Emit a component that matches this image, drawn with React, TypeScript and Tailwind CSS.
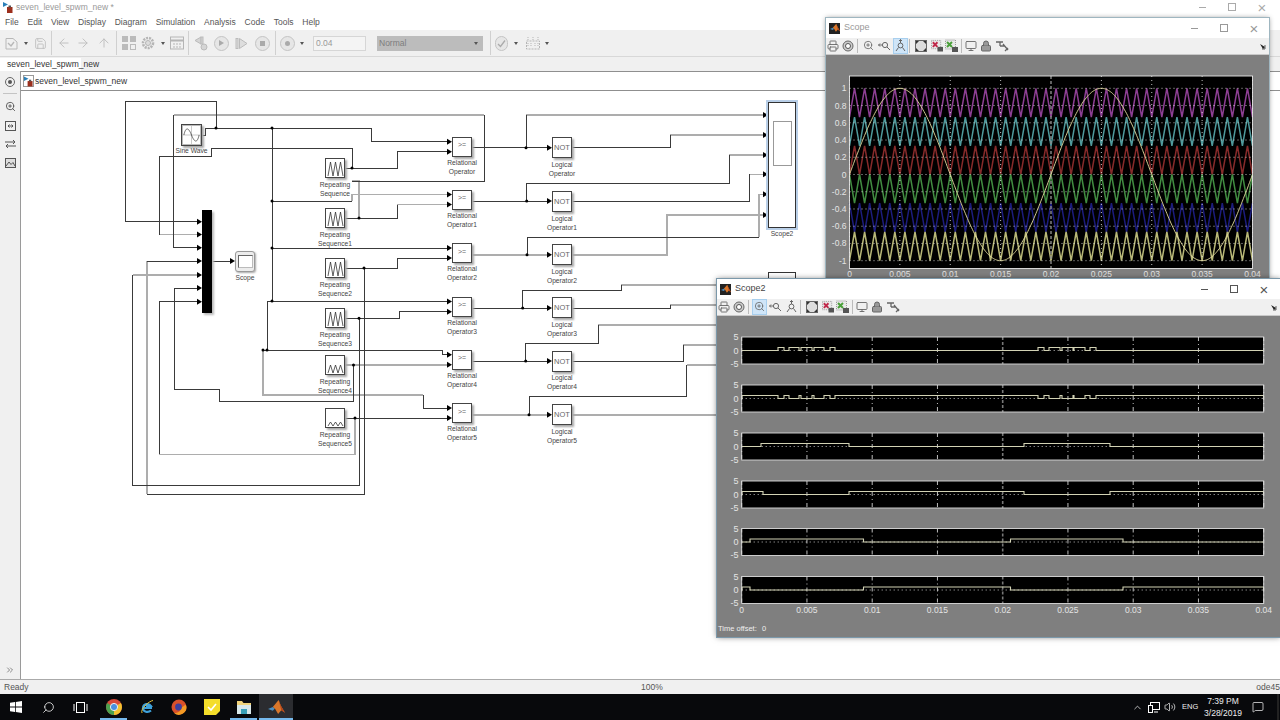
import React from 'react';
import { ArrowLeft, ArrowRight, ArrowUp, ChevronUp, ChevronsRight, Lock, MessageSquare, Monitor, Printer, Save, Search, Volume2, ZoomIn } from 'lucide-react';

const BG = '#f0f0f0';

// ---- diagram data, all in page coordinates ----
const darkWires = [
  'M202 135H205V128H371V141.7H448',
  'M216 128V101.5H125V221.7H197',
  'M272 128V301',
  'M272 201H352',
  'M272 248H448',
  'M267 350V301.5H448',
  'M263 350H442V354.7H448',
  'M423 395V408H448',
  'M345 168H397V151.7H448',
  'M352 168V148.5H211.7V156H159.3V234.5',
  'M484 115V181H352',
  'M173.7 115V247.7H197',
  'M345 218H397V204.5',
  'M345 268H397V258H448',
  'M364 268V494H146.7',
  'M146.7 261H197',
  'M345 318.3H399V311.7H448',
  'M359 318.3V485H132.7V275',
  'M353.5 365V401H219V389.3H174.3V288H197',
  'M345 418H448',
  'M159.3 454.3V301.7H197',
  'M212 261H231',
  'M472 147.7H548',
  'M526 147.7V115',
  'M572 147.7H670V135',
  'M472 201H548',
  'M526.7 201V183.3H729.3V155',
  'M572 201H749V174.3',
  'M527 254.7V237.3H759',
  'M472 308H548',
  'M522.7 308V290.7H621V284.7',
  'M572 308H670V305',
  'M472 361H548',
  'M525.7 361V343.3H598.3V325',
  'M572 361H683V345',
  'M529 414.7V396.7H686.7V365',
];

const grayWires = [
  'M352 201V194.5H448',
  'M263 350V395H423',
  'M159.3 234.5H197',
  'M173.7 115H484',
  'M352 181H359V218',
  'M397 204.5H448',
  'M146.7 494V261',
  'M132.7 275H197',
  'M345 365H448',
  'M355 418V454.3H159.3',
  'M526 115H764',
  'M670 135H764',
  'M729.3 155H764',
  'M749 174.3H764',
  'M759 237.3V194.3H764',
  'M472 254.7H548',
  'M572 254.7H666.7V215H764',
  'M621 284.7H717',
  'M670 305H717',
  'M598.3 325H717',
  'M683 345H717',
  'M686.7 365H717',
  'M472 414.7H548',
  'M572 414.7H717',
];

const arrows: [number, number][] = [
  [447, 141.7], [447, 151.7], [447, 194.5], [447, 204.5], [447, 248], [447, 258],
  [447, 301.5], [447, 311.7], [447, 354.7], [447, 364.7], [447, 408], [447, 418],
  [547, 147.7], [547, 201], [547, 254.7], [547, 308], [547, 361], [547, 414.7],
  [197, 221.7], [197, 234.5], [197, 247.7], [197, 261], [197, 275], [197, 288], [197, 301.7],
  [230, 261], [763, 115], [763, 135], [763, 155], [763, 174.3], [763, 194.3], [763, 215],
];

const dots: [number, number][] = [
  [216, 128], [272, 128], [272, 201], [272, 248], [272, 301], [267, 350], [263, 350],
  [352, 168], [359, 218], [364, 268], [359, 318.3], [353.5, 365], [355, 418],
  [526, 147.7], [526.7, 201], [527, 254.7], [522.7, 308], [525.7, 361], [529, 414.7],
];

const relOps = [136.7, 190, 243.3, 297, 350, 403.3];
const notOps = [137, 191, 244, 297, 350.7, 404];
const sequences: { y: number; low: number }[] = [
  { y: 158, low: 2 }, { y: 208, low: 2 }, { y: 258, low: 2 },
  { y: 308, low: 2 }, { y: 355, low: 8 }, { y: 408, low: 12 },
];

const at = (x: number, y: number, w?: number, h?: number): React.CSSProperties => ({ left: x - 21, top: y - 91, width: w, height: h });

const Caption = ({ cx, y, lines }: { cx: number; y: number; lines: string[] }) => (
  <div className="absolute text-center text-[6.7px] leading-[9px] text-[#444]" style={at(cx - 35, y, 70)}>
    {lines.map((l) => (
      <div key={l}>{l}</div>
    ))}
  </div>
);

const Block = ({ x, y, w, h, children }: { x: number; y: number; w: number; h: number; children?: React.ReactNode }) => (
  <div className="absolute flex items-center justify-center border border-[#444] bg-white shadow-[2px_2px_2px_#a8a8a8]" style={at(x, y, w, h)}>
    {children}
  </div>
);

const Canvas = () => (
  <div className="relative flex-1 overflow-hidden bg-white">
    <svg className="absolute inset-0" width="1259" height="588" viewBox="21 91 1259 588" shapeRendering="crispEdges">
      {grayWires.map((d) => (
        <path key={d} d={d} fill="none" stroke="#adadad" strokeWidth="1.6" />
      ))}
      {darkWires.map((d) => (
        <path key={d} d={d} fill="none" stroke="#3a3a3a" strokeWidth="1" />
      ))}
      <g shapeRendering="auto">
        {arrows.map(([x, y]) => (
          <polygon key={`${x}-${y}`} points={`${x},${y - 3} ${x + 5},${y} ${x},${y + 3}`} fill="#000" />
        ))}
        {dots.map(([x, y]) => (
          <circle key={`${x}-${y}`} cx={x} cy={y} r="1.5" fill="#000" />
        ))}
      </g>
    </svg>

    {/* sine source */}
    <Block x={181} y={124} w={21} h={22}>
      <svg width="19" height="20" viewBox="0 0 19 20" className="border border-[#bbb]">
        <path d="M0 10H19M9.5 0V20" stroke="#aaa" strokeWidth="0.7" />
        <path d="M1 10C3 1 6 1 9.5 10S16 19 18 10" fill="none" stroke="#333" strokeWidth="0.8" />
      </svg>
    </Block>
    <Caption cx={191.5} y={146} lines={['Sine Wave']} />

    {/* mux bar */}
    <div className="absolute bg-black shadow-[2px_2px_2px_#bbb]" style={at(202, 210, 10, 103)} />

    {/* scope */}
    <div className="absolute flex items-center justify-center rounded-[3px] border border-[#999] bg-[#ececec] shadow-[1px_1px_2px_#aaa]" style={at(235, 251, 20, 21)}>
      <div className="h-[13px] w-[15px] border border-[#666] border-b-[#bbb] border-r-[#bbb] bg-white" />
    </div>
    <Caption cx={245} y={273} lines={['Scope']} />

    {sequences.map((s, i) => (
      <React.Fragment key={s.y}>
        <Block x={325} y={s.y} w={20} h={20}>
          <svg width="17" height="17" viewBox="0 0 17 17">
            <polyline points={`1,16 3.5,${s.low} 6,16 8.5,${s.low} 11,16 13.5,${s.low} 16,16`} fill="none" stroke="#333" strokeWidth="0.8" />
          </svg>
        </Block>
        <Caption cx={335} y={s.y + 21.5} lines={['Repeating', i === 0 ? 'Sequence' : `Sequence${i}`]} />
      </React.Fragment>
    ))}

    {relOps.map((y, i) => (
      <React.Fragment key={y}>
        <Block x={452} y={y} w={20} h={20}>
          <span className="pb-[3px] text-[7px] text-[#666]">&gt;=</span>
        </Block>
        <Caption cx={462} y={y + 21} lines={['Relational', i === 0 ? 'Operator' : `Operator${i}`]} />
      </React.Fragment>
    ))}

    {notOps.map((y, i) => (
      <React.Fragment key={y}>
        <Block x={552} y={y} w={20} h={21}>
          <span className="text-[7.5px] text-[#666]">NOT</span>
        </Block>
        <Caption cx={562} y={y + 22.5} lines={['Logical', i === 0 ? 'Operator' : `Operator${i}`]} />
      </React.Fragment>
    ))}

    {/* big scope with 6 inputs, selected */}
    <div className="absolute border border-[#333] bg-white outline-2 outline-[#b9cfe8]" style={at(768, 102, 28, 126)}>
      <div className="ml-[4px] mt-[18px] h-[45px] w-[19px] border border-[#999] bg-white" />
    </div>
    <Caption cx={782} y={229} lines={['Scope2']} />
    <div className="absolute border border-[#333] bg-white" style={at(768, 272, 28, 120)} />
  </div>
);

// ---- scope plots ----
const range = (n: number) => Array.from({ length: n }, (_, i) => i);
const TICKS = ['0', '0.005', '0.01', '0.015', '0.02', '0.025', '0.03', '0.035', '0.04'];

const ScopePlot = () => {
  const x0 = 849.5;
  const pw = 403;
  const mid = 174.5;
  const k = 86.2;
  const px = (t: number) => x0 + (t / 0.04) * pw;
  const py = (v: number) => mid - v * k;
  const tri = (lo: number, hi: number, startHigh: boolean) =>
    range(81)
      .map((i) => {
        const up = i % 2 === 1;
        const v = up !== startHigh ? hi : lo;
        return `${px(i * 0.0005)},${py(v)}`;
      })
      .join(' ');
  const sine = range(401)
    .map((i) => {
      const t = (i / 400) * 0.04;
      return `${px(t).toFixed(1)},${py(Math.sin(2 * Math.PI * 50 * t)).toFixed(1)}`;
    })
    .join(' ');
  const bands = [
    { lo: 0.667, hi: 1, c: '#8d3f93', s: false },
    { lo: 0.333, hi: 0.667, c: '#4f9a9c', s: false },
    { lo: 0, hi: 0.333, c: '#852a2a', s: false },
    { lo: -0.333, hi: 0, c: '#418c41', s: true },
    { lo: -0.667, hi: -0.333, c: '#1c1c7c', s: true },
    { lo: -1, hi: -0.667, c: '#b8b878', s: false },
  ];
  const yTicks = [1, 0.8, 0.6, 0.4, 0.2, 0, -0.2, -0.4, -0.6, -0.8, -1];
  return (
    <svg className="block" width="443" height="223" viewBox="826 55 443 223" fontFamily="'Liberation Sans', sans-serif">
      <rect x={x0} y="76" width={pw} height="192.5" fill="#000" />
      {bands.map((b) => (
        <polyline key={b.c} points={tri(b.lo, b.hi, b.s)} fill="none" stroke={b.c} strokeWidth="1.5" />
      ))}
      {yTicks.map((v) => (
        <line key={v} x1={x0} x2={x0 + pw} y1={py(v)} y2={py(v)} stroke="#eee" strokeWidth="0.8" strokeDasharray="1 3" />
      ))}
      {TICKS.map((l, i) =>
        i === 4 ? (
          <line key={l} x1={px(i * 0.005)} x2={px(i * 0.005)} y1="76" y2="268.5" stroke="#8a8a8a" strokeWidth="1.4" strokeDasharray="3 2" />
        ) : (
          <line key={l} x1={px(i * 0.005)} x2={px(i * 0.005)} y1="76" y2="268.5" stroke="#eee" strokeWidth="0.8" strokeDasharray="1 3" />
        )
      )}
      <polyline points={sine} fill="none" stroke="#e4dea0" strokeWidth="0.9" />
      <rect x={x0} y="76" width={pw} height="192.5" fill="none" stroke="#e6e6e6" strokeWidth="0.9" />
      {yTicks.map((v) => (
        <text key={v} x="846.5" y={py(v) + 3} textAnchor="end" fontSize="8.5" fill="#e4e4e4">
          {v}
        </text>
      ))}
      {TICKS.map((l, i) => (
        <text key={l} x={px(i * 0.005)} y="277" textAnchor="middle" fontSize="8.5" fill="#e4e4e4">
          {l}
        </text>
      ))}
    </svg>
  );
};

const PULSE_A: [number, number][] = [[778, 784], [789, 799], [801, 812], [814, 824], [830, 835], [1038, 1044], [1049, 1060], [1062, 1073], [1074, 1085], [1090, 1096]];
const PULSE_B: [number, number][] = [[742, 778], [784, 789], [799, 801], [812, 814], [824, 830], [835, 1038], [1044, 1049], [1060, 1062], [1073, 1074], [1085, 1090], [1096, 1263.5]];

const rows: { top: number; highs: [number, number][] }[] = [
  { top: 337, highs: PULSE_A },
  { top: 385, highs: PULSE_B },
  { top: 433, highs: [[761, 849], [1024, 1110]] },
  { top: 481, highs: [[742, 763], [849, 1024], [1110, 1263.5]] },
  { top: 528.5, highs: [[750, 863.5], [1010.5, 1123]] },
  { top: 576.5, highs: [[742, 750], [863.5, 1010.5], [1123, 1263.5]] },
];

const Scope2Plot = () => {
  const x0 = 741.7;
  const pw = 522;
  return (
    <svg className="block" width="563" height="320" viewBox="717 316 563 320" fontFamily="'Liberation Sans', sans-serif">
      {rows.map((r) => {
        const zero = r.top + 13.5;
        const high = zero - 3;
        let d = `M${x0} ${zero}`;
        r.highs.forEach(([a, b]) => {
          d += `H${a}V${high}H${b}V${zero}`;
        });
        d += `H${x0 + pw}`;
        return (
          <g key={r.top}>
            <rect x={x0} y={r.top} width={pw} height="27" fill="#000" />
            <line x1={x0} x2={x0 + pw} y1={zero} y2={zero} stroke="#eee" strokeWidth="0.8" strokeDasharray="1 3" />
            {TICKS.map((l, i) => {
              const x = x0 + (i * pw) / 8;
              return i === 4 ? (
                <line key={l} x1={x} x2={x} y1={r.top} y2={r.top + 27} stroke="#777" strokeWidth="1.6" strokeDasharray="3 2" />
              ) : (
                <line key={l} x1={x} x2={x} y1={r.top} y2={r.top + 27} stroke="#eee" strokeWidth="0.8" strokeDasharray="4 3 1 3" />
              );
            })}
            <path d={d} fill="none" stroke="#d2d2b4" strokeWidth="1.1" />
            <rect x={x0} y={r.top} width={pw} height="27" fill="none" stroke="#dcdcdc" strokeWidth="0.9" />
            {[['5', 3], ['0', 16.5], ['-5', 29.5]].map(([t, dy]) => (
              <text key={t} x="738.5" y={r.top + (dy as number)} textAnchor="end" fontSize="9" fill="#e4e4e4">
                {t}
              </text>
            ))}
          </g>
        );
      })}
      {TICKS.map((l, i) => (
        <text key={l} x={x0 + (i * pw) / 8} y="612.5" textAnchor="middle" fontSize="8.5" fill="#e4e4e4">
          {l}
        </text>
      ))}
      <text x="718" y="631" fontSize="7.5" fill="#eee">
        Time offset:
      </text>
      <text x="762" y="631" fontSize="7.5" fill="#eee">
        0
      </text>
    </svg>
  );
};

// ---- floating window chrome ----
const Slot = ({ w, active, children }: { w: string; active?: boolean; children?: React.ReactNode }) => (
  <div className={`flex h-full shrink-0 items-center justify-center ${w}`}>
    {active ? <div className="flex h-[16px] w-[15px] items-center justify-center border border-[#a8cfee] bg-[#cfe5f8]">{children}</div> : children}
  </div>
);

const ScopeToolbar = ({ selected }: { selected: 'zoom' | 'zoomY' }) => (
  <div className="relative flex h-[17px] items-center border-b border-[#c8c8c8] bg-[#f0f0f0] pb-[1px] text-[#666]">
    <Slot w="w-[14px]">
      <Printer size={12} strokeWidth={1.8} />
    </Slot>
    <Slot w="w-[15px]">
      <svg width="12" height="12" viewBox="0 0 12 12">
        <circle cx="6" cy="6" r="5" fill="#ccc" stroke="#666" />
        <circle cx="6" cy="6" r="2.5" fill="#fff" stroke="#555" />
      </svg>
    </Slot>
    <Slot w="w-[5px]">
      <div className="h-[14px] w-px bg-[#bbb]" />
    </Slot>
    <Slot w="w-[16px]" active={selected === 'zoom'}>
      <ZoomIn size={11} strokeWidth={1.8} />
    </Slot>
    <Slot w="w-[16px]">
      <svg width="13" height="12" viewBox="0 0 13 12" fill="none" stroke="#666">
        <circle cx="7" cy="5" r="2.6" />
        <path d="M9 7l3 3M0.5 5H4M2 3.5L.5 5L2 6.5" />
      </svg>
    </Slot>
    <Slot w="w-[16px]" active={selected === 'zoomY'}>
      <svg width="11" height="13" viewBox="0 0 11 13" fill="none" stroke="#666">
        <circle cx="5.5" cy="6.5" r="2.4" />
        <path d="M5.5 0.5V4M4 2L5.5 .5L7 2M3.5 8.5L1 12M7.5 8.5L10 12" />
      </svg>
    </Slot>
    <Slot w="w-[3px]">
      <div className="h-[14px] w-px bg-[#bbb]" />
    </Slot>
    <Slot w="w-[20px]">
      <svg width="12" height="12" viewBox="0 0 12 12">
        <rect x="0.5" y="0.5" width="11" height="11" fill="#ddd" stroke="#666" />
        <path d="M1 1h3L1 4zM11 1H8l3 3zM1 11h3L1 8zM11 11H8l3-3z" fill="#333" />
      </svg>
    </Slot>
    <Slot w="w-[12px]">
      <svg width="13" height="13" viewBox="0 0 13 13">
        <rect x="0.5" y="1" width="10" height="9" fill="#e8e8e8" stroke="#999" strokeDasharray="1 1" />
        <path d="M2 3l5 5M7 3L2 8" stroke="#c0284a" strokeWidth="2" />
        <rect x="7" y="8" width="6" height="5" fill="#555" />
      </svg>
    </Slot>
    <Slot w="w-[16px]">
      <svg width="13" height="13" viewBox="0 0 13 13">
        <rect x="0.5" y="1" width="10" height="9" fill="#e8e8e8" stroke="#999" strokeDasharray="1 1" />
        <path d="M2 3l5 5M7 3L2 8" stroke="#4aa03a" strokeWidth="2" />
        <rect x="7" y="8" width="6" height="5" fill="#555" />
      </svg>
    </Slot>
    <Slot w="w-[5px]">
      <div className="h-[14px] w-px bg-[#bbb]" />
    </Slot>
    <Slot w="w-[14px]">
      <Monitor size={12} strokeWidth={1.8} />
    </Slot>
    <Slot w="w-[16px]">
      <Lock size={12} strokeWidth={2} fill="#999" />
    </Slot>
    <Slot w="w-[16px]">
      <svg width="13" height="13" viewBox="0 0 13 13" fill="none" stroke="#666" strokeWidth="1.3">
        <path d="M0 3H7M4 3V7M4 7H9M7 5l5 6M9 12l3-3" />
      </svg>
    </Slot>
    <svg className="absolute right-[2px] top-[6px]" width="7" height="6" viewBox="0 0 7 6">
      <path d="M0 0L5 3L3 5z" fill="#222" />
      <path d="M5 1V5H2" fill="none" stroke="#222" strokeWidth="0.7" />
    </svg>
  </div>
);

const MatlabLogo = ({ size }: { size: number }) => (
  <svg width={size} height={size} viewBox="0 0 16 16">
    <path d="M0 9.5L4.5 7.5L6.5 9L4.5 11z" fill="#4d8ec0" />
    <path d="M4.5 7.5L10 1L12 6L16 13L12.5 10.5L9.5 14L6.5 9z" fill="#d9772b" />
    <path d="M10 1L12 6L16 13L12.5 10.5z" fill="#b5451b" />
  </svg>
);

const WinControls = ({ color }: { color: string }) => (
  <div className={`flex items-center ${color}`}>
    <div className="flex w-[30px] justify-center">
      <div className="h-px w-[7px] bg-current" />
    </div>
    <div className="flex w-[30px] justify-center">
      <div className="h-[8px] w-[8px] border border-current" />
    </div>
    <div className="flex w-[30px] justify-center text-[15px] font-light leading-none">×</div>
  </div>
);

const ScopeWindow = () => (
  <div className="absolute left-[826px] top-[18px] flex h-[261px] w-[443px] flex-col bg-[#7f7f7f] shadow-[0_0_5px_rgba(0,0,0,0.45)] ring-1 ring-[#9fb6c0]">
    <div className="flex h-[20px] items-center justify-between bg-white pl-[3px] pr-[0px]">
      <div className="flex items-center gap-[4px]">
        <div className="flex h-[11px] w-[11px] items-center justify-center bg-[#222]">
          <MatlabLogo size={10} />
        </div>
        <span className="text-[9px] text-[#999]">Scope</span>
      </div>
      <WinControls color="text-[#999]" />
    </div>
    <ScopeToolbar selected="zoomY" />
    <ScopePlot />
  </div>
);

const Scope2Window = () => (
  <div className="absolute left-[717px] top-[279px] flex h-[358px] w-[563px] flex-col bg-[#7f7f7f] shadow-[0_0_6px_rgba(0,0,0,0.55)] ring-1 ring-[#7b98aa]">
    <div className="flex h-[20px] items-center justify-between bg-white pl-[3px] pr-[1px]">
      <div className="flex items-center gap-[4px]">
        <div className="flex h-[11px] w-[11px] items-center justify-center bg-[#222]">
          <MatlabLogo size={10} />
        </div>
        <span className="text-[9px] text-[#444]">Scope2</span>
      </div>
      <WinControls color="text-[#555]" />
    </div>
    <ScopeToolbar selected="zoom" />
    <Scope2Plot />
  </div>
);

// ---- main window bars ----
const ModelIcon = () => (
  <svg width="10" height="11" viewBox="0 0 10 11">
    <path d="M0 0L5 2.5L0 5z" fill="#2b7fb8" />
    <rect x="4" y="5" width="5.5" height="6" fill="#9c2f1c" />
    <rect x="5.5" y="3.5" width="2.5" height="2" fill="#555" />
  </svg>
);

const Caret = () => <div className="h-0 w-0 border-x-[2.5px] border-t-[3px] border-x-transparent border-t-[#555]" />;

const Sep = ({ w }: { w: string }) => (
  <div className={`flex h-full shrink-0 items-center justify-center ${w}`}>
    <div className="h-[24px] w-px bg-[#d0d0d0]" />
  </div>
);

const Tb = ({ w, children }: { w: string; children?: React.ReactNode }) => (
  <div className={`flex h-full shrink-0 items-center justify-center ${w}`}>{children}</div>
);

const RoundBtn = ({ children }: { children?: React.ReactNode }) => (
  <div className="flex h-[15px] w-[15px] items-center justify-center rounded-full border border-[#c4c4c4] bg-[#e6e6e6]">{children}</div>
);

const MainToolbar = () => (
  <div className="flex h-[27px] items-center border-b border-[#d8d8d8] pl-[4px] text-[#bdbdbd]" style={{ backgroundColor: BG }}>
    <Tb w="w-[15px]">
      <svg width="13" height="13" viewBox="0 0 13 13" fill="none" stroke="#b8b8b8">
        <path d="M1 1.5H8L12 5V12H1z" />
        <path d="M3 6L6 9L9 5" strokeWidth="1.4" />
      </svg>
    </Tb>
    <Tb w="w-[13px]">
      <Caret />
    </Tb>
    <Tb w="w-[16px]">
      <Save size={13} strokeWidth={1.6} />
    </Tb>
    <Sep w="w-[6px]" />
    <Tb w="w-[19px]">
      <ArrowLeft size={14} strokeWidth={1.6} />
    </Tb>
    <Tb w="w-[20px]">
      <ArrowRight size={14} strokeWidth={1.6} />
    </Tb>
    <Tb w="w-[21px]">
      <ArrowUp size={14} strokeWidth={1.6} />
    </Tb>
    <Sep w="w-[5px]" />
    <Tb w="w-[19px]">
      <svg width="14" height="14" viewBox="0 0 14 14" fill="#bbb">
        <rect x="0" y="0" width="6" height="6" />
        <rect x="8" y="0" width="6" height="6" />
        <rect x="0" y="8" width="6" height="6" />
        <rect x="8.5" y="8.5" width="5" height="5" fill="none" stroke="#bbb" />
      </svg>
    </Tb>
    <Tb w="w-[20px]">
      <svg width="14" height="14" viewBox="0 0 14 14">
        <circle cx="7" cy="7" r="5" fill="none" stroke="#b5b5b5" strokeWidth="2.6" strokeDasharray="2 1" />
        <circle cx="7" cy="7" r="2.5" fill="#ddd" stroke="#b5b5b5" />
      </svg>
    </Tb>
    <Tb w="w-[9px]">
      <Caret />
    </Tb>
    <Tb w="w-[19px]">
      <svg width="14" height="14" viewBox="0 0 14 14" fill="none" stroke="#b5b5b5">
        <rect x="0.5" y="1" width="13" height="12" />
        <path d="M0.5 4.5H13.5" strokeWidth="2" />
        <path d="M3 8H11M3 11H11" strokeDasharray="2 1" />
      </svg>
    </Tb>
    <Sep w="w-[4px]" />
    <Tb w="w-[23px]">
      <svg width="16" height="15" viewBox="0 0 16 15" fill="#d5d5d5" stroke="#bbb">
        <path d="M7 1V8L1 4.5z" />
        <rect x="7" y="1" width="2" height="7" />
        <circle cx="10" cy="11" r="3" />
      </svg>
    </Tb>
    <Tb w="w-[16px]">
      <RoundBtn>
        <div className="ml-[1px] h-0 w-0 border-y-[3.5px] border-l-[5px] border-y-transparent border-l-[#aaa]" />
      </RoundBtn>
    </Tb>
    <Tb w="w-[24px]">
      <svg width="13" height="13" viewBox="0 0 13 13" fill="#ddd" stroke="#bbb">
        <rect x="1" y="1.5" width="2" height="10" />
        <path d="M4.5 1.5L12 6.5L4.5 11.5z" />
      </svg>
    </Tb>
    <Tb w="w-[19px]">
      <RoundBtn>
        <div className="h-[5px] w-[5px] bg-[#aaa]" />
      </RoundBtn>
    </Tb>
    <Sep w="w-[6px]" />
    <Tb w="w-[19px]">
      <RoundBtn>
        <div className="h-[5px] w-[5px] rounded-full bg-[#aaa]" />
      </RoundBtn>
    </Tb>
    <Tb w="w-[9px]">
      <Caret />
    </Tb>
    <div className="ml-[7px] flex h-[15px] w-[53px] items-center border border-[#d6d6d6] bg-[#f4f4f4] pl-[2px] text-[8.5px] text-[#999]">0.04</div>
    <div className="ml-[11px] flex h-[15px] w-[106px] items-center justify-between bg-[#bcbcbc] pl-[2px] pr-[5px] text-[8.5px] text-[#7c7c7c]">
      Normal
      <Caret />
    </div>
    <div className="ml-[2px] flex h-full">
      <Sep w="w-[10px]" />
    </div>
    <Tb w="w-[13px]">
      <RoundBtn>
        <svg width="9" height="9" viewBox="0 0 9 9" fill="none" stroke="#aaa" strokeWidth="1.3">
          <path d="M1 5L3.5 7.5L8 1.5" />
        </svg>
      </RoundBtn>
    </Tb>
    <Tb w="w-[15px]">
      <Caret />
    </Tb>
    <Tb w="w-[19px]">
      <svg width="14" height="13" viewBox="0 0 14 13" fill="none" stroke="#b5b5b5">
        <path d="M2 0V3M7 0V3M12 0V3" strokeDasharray="1 1" />
        <rect x="0.5" y="4" width="13" height="8" strokeDasharray="2 1" />
        <path d="M2 6V10M5 6V10M9 6V10M12 6V10" strokeDasharray="1 1" />
      </svg>
    </Tb>
    <Tb w="w-[9px]">
      <Caret />
    </Tb>
  </div>
);

const MENU = ['File', 'Edit', 'View', 'Display', 'Diagram', 'Simulation', 'Analysis', 'Code', 'Tools', 'Help'];

const LeftStrip = () => (
  <div className="flex w-[21px] shrink-0 flex-col items-center border-r border-[#9a9a9a] text-[#555]" style={{ backgroundColor: BG }}>
    <div className="mt-[6px] flex h-[10px] w-[10px] items-center justify-center rounded-full border border-[#666]">
      <div className="h-[4px] w-[4px] rounded-full bg-[#555]" />
    </div>
    <div className="mt-[6px] h-px w-[14px] bg-[#c4c4c4]" />
    <div className="mt-[7px]">
      <ZoomIn size={11} strokeWidth={2} />
    </div>
    <svg className="mt-[9px]" width="11" height="10" viewBox="0 0 11 10" fill="none" stroke="#555">
      <rect x="0.5" y="0.5" width="10" height="9" />
      <path d="M3 5H8M3 5L4.5 3.5M3 5L4.5 6.5M8 5L6.5 3.5M8 5L6.5 6.5" />
    </svg>
    <svg className="mt-[8px]" width="11" height="10" viewBox="0 0 11 10" fill="none" stroke="#555">
      <path d="M0 3H10M8 1L10 3L8 5M11 7H1M3 5L1 7L3 9" />
    </svg>
    <svg className="mt-[9px]" width="11" height="10" viewBox="0 0 11 10" fill="none" stroke="#555">
      <rect x="0.5" y="0.5" width="10" height="9" fill="#ddd" />
      <path d="M1 8L4 4L6 6.5L8 4.5L10 8" />
    </svg>
    <div className="flex-1" />
    <ChevronsRight size={10} strokeWidth={1.6} className="mb-[4px]" />
  </div>
);

// ---- taskbar ----
const TaskSlot = ({ w, active, bar, children }: { w: string; active?: boolean; bar?: string; children: React.ReactNode }) => (
  <div className={`relative flex h-full shrink-0 items-center justify-center ${w} ${active ? 'bg-[#2b2c30]' : ''}`}>
    {children}
    {bar && <div className={`absolute bottom-0 h-[2px] bg-[#76b9ed] ${bar}`} />}
  </div>
);

const Taskbar = () => (
  <div className="flex h-[26px] items-center bg-[#08090c] text-white">
    <TaskSlot w="w-[32px]">
      <svg width="12" height="12" viewBox="0 0 12 12" fill="#fff">
        <path d="M0 1.8L5 1V5.6H0zM5.8 0.9L12 0V5.6H5.8zM0 6.4H5V11L0 10.2zM5.8 6.4H12V12L5.8 11.1z" />
      </svg>
    </TaskSlot>
    <TaskSlot w="w-[32px]">
      <Search size={13} strokeWidth={1.4} className="-scale-x-100" />
    </TaskSlot>
    <TaskSlot w="w-[32px]">
      <svg width="15" height="11" viewBox="0 0 15 11" fill="none" stroke="#fff">
        <rect x="3.5" y="0.5" width="8" height="10" />
        <path d="M1 2V9M14 2V9" />
      </svg>
    </TaskSlot>
    <TaskSlot w="w-[36px]" bar="left-[4px] right-[5px]">
      <svg width="16" height="16" viewBox="0 0 16 16">
        <circle cx="8" cy="8" r="8" fill="#d94a3a" />
        <path d="M8 8L1.1 4A8 8 0 0 0 8 16z" fill="#4ba14f" />
        <path d="M8 8L8 16A8 8 0 0 0 14.9 4z" fill="#f2c230" />
        <circle cx="8" cy="8" r="3.6" fill="#4a8fe0" stroke="#eee" strokeWidth="1" />
      </svg>
    </TaskSlot>
    <TaskSlot w="w-[30px]">
      <svg width="16" height="16" viewBox="0 0 16 16" fill="none">
        <path d="M13 9H4C4 5 10 3.5 12 7H7" stroke="#3fa2dc" strokeWidth="2.2" />
        <path d="M4 9C4 13 9 14 12 11.5" stroke="#3fa2dc" strokeWidth="2.2" />
        <path d="M3 14C1 10 10 2 14 1.5" stroke="#e6c23a" strokeWidth="1" />
      </svg>
    </TaskSlot>
    <TaskSlot w="w-[33px]">
      <svg width="16" height="16" viewBox="0 0 16 16">
        <circle cx="8" cy="8" r="7.5" fill="#d9502a" />
        <path d="M15 6A7.5 7.5 0 0 1 3 14C7 14 10 12 10 9C12 8 13 6 15 6z" fill="#f39a24" />
        <circle cx="7.5" cy="8" r="3.4" fill="#3d3f9e" />
      </svg>
    </TaskSlot>
    <TaskSlot w="w-[33px]">
      <svg width="16" height="16" viewBox="0 0 16 16">
        <path d="M0 0H16V12L12 16H0z" fill="#f4dd2a" />
        <path d="M4 8L7 11L12 5" fill="none" stroke="#fff" strokeWidth="1.7" />
      </svg>
    </TaskSlot>
    <TaskSlot w="w-[31px]" bar="left-[2px] right-[2px]">
      <svg width="16" height="15" viewBox="0 0 16 15">
        <path d="M1 1H6L7.5 3H15V14H1z" fill="#f0d27a" />
        <rect x="1" y="5" width="14" height="9" fill="#d9e8ea" />
        <rect x="5" y="9" width="6" height="5" fill="#3aa0b8" />
      </svg>
    </TaskSlot>
    <TaskSlot w="w-[34px]" active bar="left-0 right-0">
      <MatlabLogo size={17} />
    </TaskSlot>
    <div className="flex-1" />
    <div className="flex h-full w-[16px] items-center justify-center">
      <ChevronUp size={11} strokeWidth={1.5} />
    </div>
    <svg className="ml-[3px]" width="12" height="11" viewBox="0 0 12 11" fill="none" stroke="#fff">
      <rect x="2.5" y="0.5" width="9" height="7" />
      <rect x="0.5" y="3.5" width="4" height="7" fill="#08090c" />
      <path d="M6 10H10" />
    </svg>
    <Volume2 size={12} strokeWidth={1.4} className="ml-[4px]" />
    <span className="ml-[6px] w-[15px] text-[7.5px] text-[#eee]">ENG</span>
    <div className="ml-[5px] flex w-[42px] flex-col items-center text-[8.5px] leading-[12px] text-[#eee]">
      <span>7:39 PM</span>
      <span>3/28/2019</span>
    </div>
    <div className="ml-[7px] flex w-[14px] justify-center">
      <MessageSquare size={12} strokeWidth={1.4} />
    </div>
    <div className="ml-[12px] mr-[1px] h-full w-[2px] bg-[#222]" />
  </div>
);

export default function App() {
  return (
    <div className="relative flex h-[720px] w-[1280px] flex-col overflow-hidden bg-white font-['Liberation_Sans',Arial,sans-serif]">
      <div className="flex h-[14px] items-center justify-between bg-white pl-[3px] pr-[3px]">
        <div className="flex items-center gap-[3px]">
          <ModelIcon />
          <span className="text-[8.5px] text-[#999]">seven_level_spwm_new *</span>
        </div>
        <WinControls color="text-[#aaa]" />
      </div>
      <div className="flex h-[16px] items-center gap-[8.8px] bg-white pl-[5px] text-[8.5px] text-[#555]">
        {MENU.map((m) => (
          <span key={m}>{m}</span>
        ))}
      </div>
      <MainToolbar />
      <div className="flex h-[14px] items-end" style={{ backgroundColor: BG }}>
        <div className="flex h-[13px] w-[81px] items-center bg-white pl-[7px] text-[8.5px] text-[#333]">seven_level_spwm_new</div>
      </div>
      <div className="flex min-h-0 flex-1">
        <LeftStrip />
        <div className="flex min-w-0 flex-1 flex-col border-0">
          <div className="flex h-[20px] shrink-0 items-center gap-[1px] border-y border-[#8f8f8f] bg-white pl-[2px]">
            <div className="flex h-[12px] w-[11px] items-center justify-center border border-[#999]">
              <ModelIcon />
            </div>
            <span className="text-[8.5px] text-[#333]">seven_level_spwm_new</span>
          </div>
          <Canvas />
        </div>
      </div>
      <div className="relative flex h-[15px] items-center border-t border-[#aaa] pl-[4px] text-[8.5px] text-[#555]" style={{ backgroundColor: BG }}>
        Ready
        <span className="absolute left-[641px]">100%</span>
        <span className="absolute right-0">ode45</span>
      </div>
      <Taskbar />
      <ScopeWindow />
      <Scope2Window />
    </div>
  );
}
